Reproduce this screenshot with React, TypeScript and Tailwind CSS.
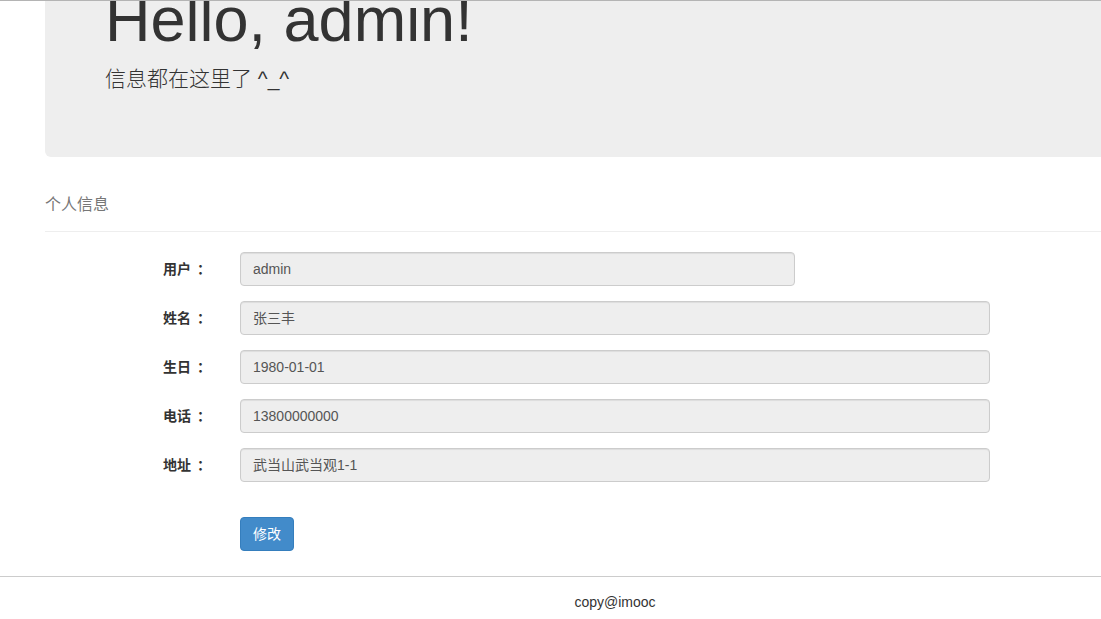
import React from "react";

const font = {
  fontFamily: '"Liberation Sans", Arial, "Noto Sans CJK SC", sans-serif',
};

const rows: { label: string; value: string; wide: boolean }[] = [
  { label: "用户", value: "admin", wide: false },
  { label: "姓名", value: "张三丰", wide: true },
  { label: "生日", value: "1980-01-01", wide: true },
  { label: "电话", value: "13800000000", wide: true },
  { label: "地址", value: "武当山武当观1-1", wide: true },
];

export default function App() {
  return (
    <div
      className="relative w-[1101px] h-[619px] overflow-hidden bg-white text-[#333] text-[14px]"
      style={font}
    >
      <div className="absolute left-0 top-0 w-full h-px bg-[#b4b4b4] z-10" />
      <div className="w-[1230px] mt-[-83px]">
        <div className="ml-[30px] w-[1170px] px-[15px]">
          <div className="rounded-[6px] bg-[#eeeeee] px-[60px] pt-[48px] pb-[48px]">
            <h1 className="text-[63px] leading-[1.1] mt-[20px] mb-[10px] text-[#333]">
              Hello, admin!
            </h1>
            <p className="text-[21px] leading-[30px] mb-[15px] font-[200] text-[#333]">
              信息都在这里了 ^_^
            </p>
          </div>

          <div className="mt-[37px] pb-[15px] border-b border-[#eeeeee] text-[16px] leading-[22px] text-[#777]">
            个人信息
          </div>

          <div className="mt-[20px] flex flex-col gap-[15px]">
            {rows.map((r) => (
              <div key={r.label} className="flex items-center">
                <label className="w-[166px] flex justify-end font-bold text-[14px] leading-[20px] text-[#333]">
                  <span>{r.label}</span>
                  <span className="ml-[6px]">：</span>
                </label>
                <div className="ml-[29px]">
                  <div
                    className={`${r.wide ? "w-[750px]" : "w-[555px]"} h-[34px] rounded-[4px] border border-[#cccccc] bg-[#eeeeee] px-[12px] flex items-center text-[14px] text-[#555] shadow-[inset_0_1px_1px_rgba(0,0,0,0.075)]`}
                  >
                    {r.value}
                  </div>
                </div>
              </div>
            ))}
            <div className="mt-[20px] pl-[195px]">
              <button className="w-[54px] h-[34px] rounded-[4px] border border-[#357ebd] bg-[#428bca] text-white text-[14px]">
                修改
              </button>
            </div>
          </div>
        </div>
        <div className="mt-[25px] h-px bg-[#cccccc] w-full" />
        <div className="w-[1230px] text-center pt-[15px] text-[14px] leading-[20px] text-[#333]">
          copy@imooc
        </div>
      </div>
    </div>
  );
}
